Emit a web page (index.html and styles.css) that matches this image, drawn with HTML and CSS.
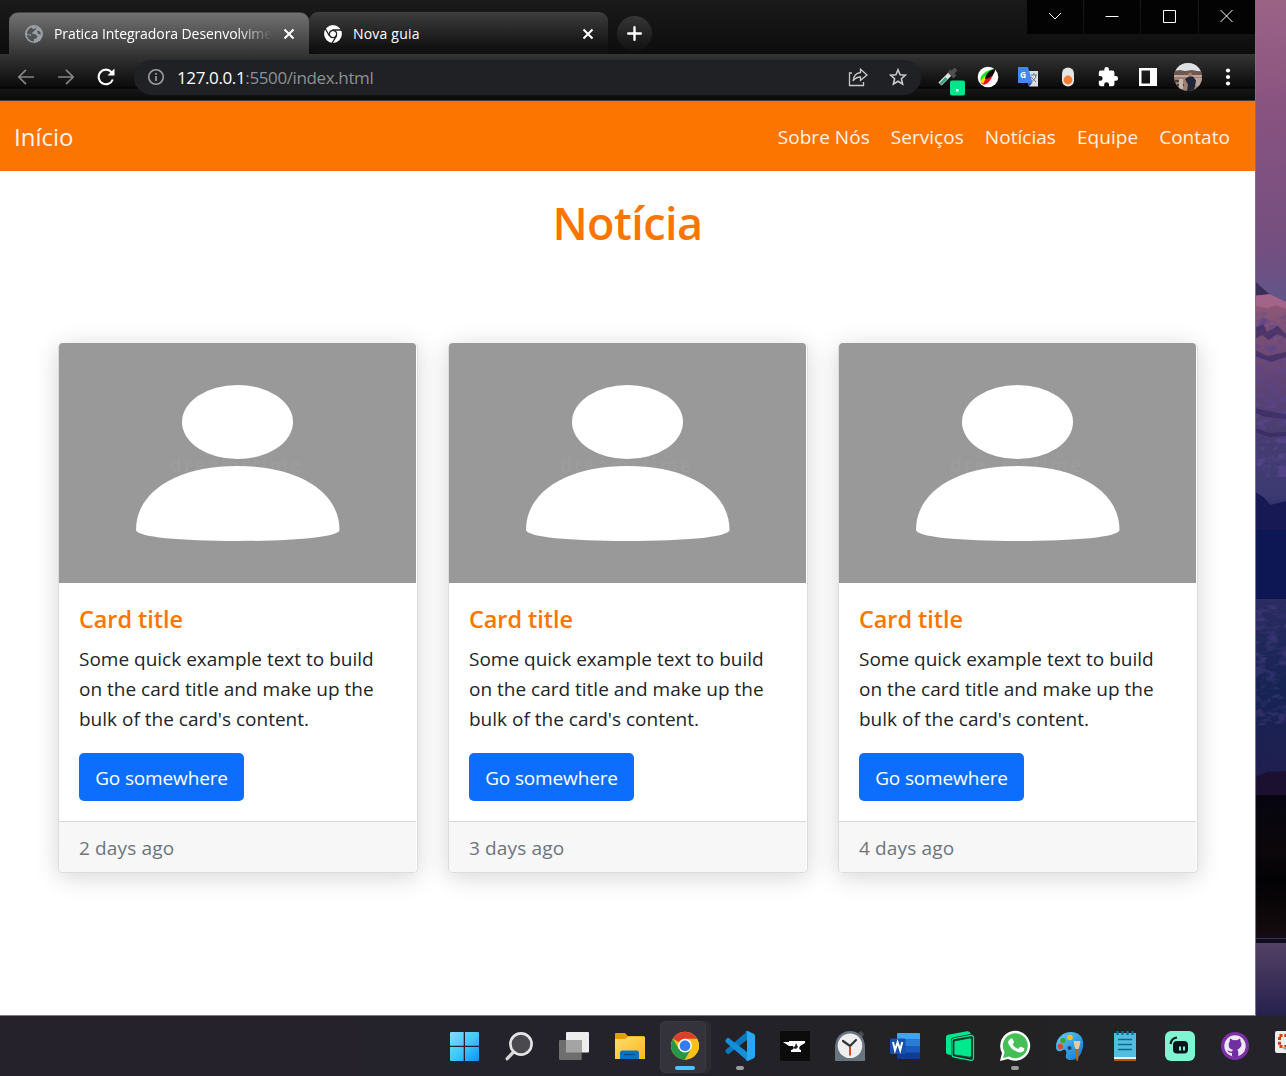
FILE: index.html
```html
<!DOCTYPE html>
<html lang="pt-BR">
<head>
<meta charset="utf-8">
<title>Pratica Integradora Desenvolvimento</title>
<link rel="stylesheet" href="styles.css">
</head>
<body>
<div class="desktop">
  <div class="browser">
    <div class="tabstrip">
      <div class="tab tab-active">
        <svg class="favicon" viewBox="0 0 18 18"><circle cx="9" cy="9" r="9" fill="#9aa0a6"/><path d="M2 9C2 6 3.500 3.500 6.500 2.500L8.500 4.500 11.500 2.300Q11 5.500 8.500 6.500L6.500 8.500l3 .5 3 2-1 2.500L9 14v2.500C5 16.500 2 13.500 2 9.500l4 1.500v-1.500ZM12 5.500l3 1 1 3-3-.5Z" fill="#505254"/></svg>
        <span class="tab-title fade">Pratica Integradora Desenvolvime</span>
        <svg class="close" viewBox="0 0 12 12"><path d="M1.500 1.500l9 9M10.500 1.500l-9 9"/></svg>
      </div>
      <div class="tab tab-idle">
        <svg class="favicon" viewBox="0 0 18 18"><circle cx="9" cy="9" r="6.400" fill="none" stroke="#fff" stroke-width="5"/><circle cx="9" cy="9" r="3" fill="#fff"/><path d="M8.500 5H18M5.300 10.700L1 3M12.600 10.700L8 18.300" stroke="#222" stroke-width="1.300"/><circle cx="9" cy="9" r="3.700" fill="none" stroke="#222" stroke-width="1.200"/></svg>
        <span class="tab-title">Nova guia</span>
        <svg class="close" viewBox="0 0 12 12"><path d="M1.500 1.500l9 9M10.500 1.500l-9 9"/></svg>
      </div>
      <div class="newtab"><svg width="15" height="15" viewBox="0 0 15 15"><path d="M7.500 1.200v12.600M1.200 7.500h12.600" stroke="#fff" stroke-width="2.400" stroke-linecap="round"/></svg></div>
      <div class="winctl">
        <span><svg width="14" height="14" viewBox="0 0 14 14"><path d="M1 4l6 6 6-6"/></svg></span>
        <span><svg width="14" height="14" viewBox="0 0 14 14"><path d="M.5 7.500h13"/></svg></span>
        <span><svg width="14" height="14" viewBox="0 0 14 14"><path d="M.5 1.500h12v12h-12z"/></svg></span>
        <span><svg width="14" height="14" viewBox="0 0 14 14"><path d="M.5 1l12 12M12.500 1L.5 13"/></svg></span>
      </div>
    </div>
    <div class="toolbar">
      <svg class="nav-ico" viewBox="0 0 18 18"><path d="M17 9H2M9 1.800L1.800 9 9 16.200" fill="none" stroke="#858585" stroke-width="1.700"/></svg>
      <svg class="nav-ico" viewBox="0 0 18 18"><path d="M1 9h15M9 1.800L16.200 9 9 16.200" fill="none" stroke="#858585" stroke-width="1.700"/></svg>
      <svg class="nav-ico" viewBox="0 0 18 18"><path d="M15.800 11.500A7.300 7.300 0 1 1 14.500 4.200" fill="none" stroke="#fff" stroke-width="2.100"/><path d="M17.500.5v7h-7z" fill="#fff"/></svg>
      <div class="omnibox">
        <svg class="info" viewBox="0 0 18 18"><circle cx="9" cy="9" r="7.300" fill="none" stroke="#9aa0a6" stroke-width="1.600"/><path d="M9 8v5M9 5v1.700" stroke="#9aa0a6" stroke-width="1.700"/></svg>
        <span class="url"><b>127.0.0.1</b>:5500/index.html</span>
        <svg class="share" viewBox="0 0 20 20"><path d="M4 6H1.500v12.500H15.500V15M12.500 2.200L19 8l-6.500 5.300V10C9 10 7 11 5 14 5.500 9 8.500 6 12.500 5.500Z" fill="none" stroke="#c8c9ca" stroke-width="1.300"/></svg>
        <svg class="star" viewBox="0 0 18 18"><path d="M9 1.800l2.100 5 5.300.4-4 3.500 1.200 5.300L9 13.200 4.400 16l1.200-5.300-4-3.500 5.300-.4Z" fill="none" stroke="#c8c9ca" stroke-width="1.600"/></svg>
      </div>
      <div class="extensions">
        <svg width="28" height="30" viewBox="0 0 28 30"><path d="M2 18L13 7" stroke="#dce7e3" stroke-width="4.500"/><path d="M2.500 18L8.500 12" stroke="#37a27b" stroke-width="2.500"/><path d="M11 5l6 6M13.500 7.500L18 3" stroke="#505050" stroke-width="4"/><rect x="12" y="14.500" width="15" height="15" rx="2" fill="#00e58b"/><rect x="18" y="23" width="2.500" height="2.500" fill="#fff"/></svg>
        <svg width="22" height="22" viewBox="0 0 22 22"><circle cx="11" cy="11" r="10.300" fill="#fff"/><path d="M4 16C1 10 10 3 18 3L9 13Z" fill="#17e51f"/><path d="M4 17C8 22 15 15 18 3L9 12Z" fill="#f10c18"/><path d="M3.500 15L8 10l1 2-3 6Z" fill="#ffd900"/><path d="M8 13C9 7 13 4 18 3 18 8 14 12 8 13Z" fill="#050505"/></svg>
        <svg width="22" height="22" viewBox="0 0 22 22"><path d="M9 5h12v15.500H12Z" fill="#ddd"/><path d="M1 1h10l4.500 16H1Z" fill="#4386ee"/><path d="M11 17h4l-2.500 3.500Z" fill="#315bbb"/><text x="3" y="11.500" font-size="8.500" font-family="Open Sans, sans-serif" font-weight="700" fill="#fff">G</text><path d="M14 9h6M17 7v2M19 9c0 3-3 6-5 7M14 11l5 5" fill="none" stroke="#607d8b" stroke-width="1"/></svg>
        <svg width="22" height="22" viewBox="0 0 22 22"><rect x="5" y="1.500" width="12" height="19" rx="6" fill="#e4e4e4"/><circle cx="11" cy="14" r="4.400" fill="#f57c30"/></svg>
        <svg width="22" height="22" viewBox="0 0 24 24"><path d="M20.500 11H19V7a2 2 0 0 0-2-2h-4V3.500a2.500 2.500 0 0 0-5 0V5H4a2 2 0 0 0-2 2v3.800h1.500a2.700 2.700 0 0 1 0 5.400H2V20a2 2 0 0 0 2 2h3.800v-1.500a2.700 2.700 0 0 1 5.400 0V22H17a2 2 0 0 0 2-2v-4h1.500a2.500 2.500 0 0 0 0-5Z" fill="#fff"/></svg>
        <svg width="22" height="22" viewBox="0 0 22 22"><path fill-rule="evenodd" d="M2 2h18v18H2ZM4.500 4.500v13H13v-13Z" fill="#fff"/></svg>
        <svg width="28" height="28" viewBox="0 0 28 28"><clipPath id="avatar"><circle cx="14" cy="14" r="14"/></clipPath><g clip-path="url(#avatar)"><rect width="28" height="28" fill="#9a7f72"/><rect width="28" height="8" fill="#dfe0e2"/><path d="M0 8l6-1 5 1 7-1 10 2v5H0Z" fill="#6d5750"/><path d="M0 12h28v2H0Z" fill="#c0a497"/><path d="M1 17h8v2H1ZM3 21h7v2H3Z" fill="#473d3b"/><path d="M5 16h4v10H5Z" fill="#c3b7ad"/><path d="M20 15h8v8h-8Z" fill="#b3a39b"/><circle cx="16" cy="11.500" r="2" fill="#af7b63"/><path d="M11 16l4-2.500h4l3 4-1 6-2 5h-6l1-7Z" fill="#1f2535"/></g></svg>
        <svg width="6" height="18" viewBox="0 0 6 18"><circle cx="3" cy="2.500" r="2.100" fill="#fff"/><circle cx="3" cy="9" r="2.100" fill="#fff"/><circle cx="3" cy="15.500" r="2.100" fill="#fff"/></svg>
      </div>
    </div>
    <div class="page">
      <nav class="navbar">
        <a class="brand">Início</a>
        <div class="links"><a>Sobre Nós</a><a>Serviços</a><a>Notícias</a><a>Equipe</a><a>Contato</a></div>
      </nav>
      <h1>Notícia</h1>
      <main class="cards">
        <article class="card">
          <svg class="photo" viewBox="0 0 357 240"><rect width="357" height="240" fill="#999"/><text class="mark" x="111" y="129">dreamstime</text><ellipse cx="178.500" cy="79" rx="55.500" ry="37" fill="#fff"/><path d="M77 187C77 149 117 123 178.500 123S280.500 149 280.500 187C280 194 236 198 178.500 198S78 194 77 187Z" fill="#fff"/></svg>
          <div class="card-body"><h2>Card title</h2><p>Some quick example text to build<br>on the card title and make up the<br>bulk of the card's content.</p><a class="btn">Go somewhere</a></div>
          <footer>2 days ago</footer>
        </article>
        <article class="card">
          <svg class="photo" viewBox="0 0 357 240"><rect width="357" height="240" fill="#999"/><text class="mark" x="111" y="129">dreamstime</text><ellipse cx="178.500" cy="79" rx="55.500" ry="37" fill="#fff"/><path d="M77 187C77 149 117 123 178.500 123S280.500 149 280.500 187C280 194 236 198 178.500 198S78 194 77 187Z" fill="#fff"/></svg>
          <div class="card-body"><h2>Card title</h2><p>Some quick example text to build<br>on the card title and make up the<br>bulk of the card's content.</p><a class="btn">Go somewhere</a></div>
          <footer>3 days ago</footer>
        </article>
        <article class="card">
          <svg class="photo" viewBox="0 0 357 240"><rect width="357" height="240" fill="#999"/><text class="mark" x="111" y="129">dreamstime</text><ellipse cx="178.500" cy="79" rx="55.500" ry="37" fill="#fff"/><path d="M77 187C77 149 117 123 178.500 123S280.500 149 280.500 187C280 194 236 198 178.500 198S78 194 77 187Z" fill="#fff"/></svg>
          <div class="card-body"><h2>Card title</h2><p>Some quick example text to build<br>on the card title and make up the<br>bulk of the card's content.</p><a class="btn">Go somewhere</a></div>
          <footer>4 days ago</footer>
        </article>
      </main>
    </div>
  </div>
  <svg class="wallpaper" width="31" height="1016" viewBox="0 0 30 1016" preserveAspectRatio="none">
    <defs>
      <linearGradient id="sky" x1="0" y1="0" x2="0" y2="1"><stop offset="0" stop-color="#9b6386"/><stop offset=".35" stop-color="#895380"/><stop offset=".8" stop-color="#744f80"/><stop offset="1" stop-color="#5d5689"/></linearGradient>
      <linearGradient id="rock" x1="0" y1="0" x2="0" y2="1"><stop offset="0" stop-color="#8d5876"/><stop offset=".3" stop-color="#654575"/><stop offset=".6" stop-color="#453c70"/><stop offset=".85" stop-color="#3c3a72"/><stop offset="1" stop-color="#14164f"/></linearGradient>
      <linearGradient id="snow" x1="0" y1="0" x2="0" y2="1"><stop offset="0" stop-color="#2b2c61"/><stop offset=".5" stop-color="#152453"/><stop offset="1" stop-color="#211e51"/></linearGradient>
      <linearGradient id="lake" x1="0" y1="0" x2="0" y2="1"><stop offset="0" stop-color="#584466"/><stop offset="1" stop-color="#25204e"/></linearGradient>
      <linearGradient id="shore" x1="0" y1="0" x2="0" y2="1"><stop offset="0" stop-color="#060510"/><stop offset=".4" stop-color="#0b070a"/><stop offset=".6" stop-color="#020204"/><stop offset="1" stop-color="#150c0e"/></linearGradient>
      <filter id="grain" x="0" y="0" width="1" height="1"><feTurbulence type="fractalNoise" baseFrequency=".09 .16" numOctaves="3" seed="4"/><feColorMatrix values="0 0 0 0 .1  0 0 0 0 .06  0 0 0 0 .28  4 0 0 0 -1.900"/></filter>
    </defs>
    <rect width="30" height="310" fill="url(#sky)"/>
    <path d="M0 281l6 6 9 8H0Z" fill="#3b2d59"/>
    <path d="M0 296l14-2 16 8v12H0Z" fill="#a4648a"/>
    <path d="M0 306l12 2 8-3 10 4v221H0Z" fill="url(#rock)"/>
    <rect y="312" width="30" height="165" filter="url(#grain)" opacity=".8"/>
    <path d="M0 328l8-4 4 8 10-6 8 8v4l-9-4-8 6-6-5-7 4ZM0 350l12 6 18-4v5l-14 5L0 356ZM0 408l12 3 18 3v5l-20-2-10-4ZM0 428l14 5 16-1v4l-16 1L0 432Z" fill="#33265d" opacity=".6"/>
    <path d="M0 492l8 5 7 8 15-4v50H0Z" fill="#171954"/>
    <rect y="530" width="30" height="70" fill="#0d1753"/>
    <rect y="599" width="30" height="180" fill="url(#snow)"/>
    <rect y="605" width="30" height="120" filter="url(#grain)" opacity=".4"/>
    <path d="M0 777l12-5 18-1v31H0Z" fill="#1b1030"/>
    <rect y="795" width="30" height="142" fill="url(#shore)"/>
    <rect y="936" width="30" height="80" fill="url(#lake)"/>
    <path d="M0 935h30v8H0Z" fill="#100c1b"/><path d="M0 938h30v1H0Z" fill="#423345"/>
    <rect width="1" height="1016" fill="#777"/>
  </svg>
</div>
<div class="taskbar">
  <svg viewBox="0 0 30 30"><defs><linearGradient id="win" gradientUnits="userSpaceOnUse" x1="0" y1="1" x2="29" y2="30"><stop offset="0" stop-color="#83dcff"/><stop offset=".5" stop-color="#43c8fc"/><stop offset="1" stop-color="#0795f5"/></linearGradient></defs><path d="M1 1h12.700v13.700H0V2a1 1 0 0 1 1-1ZM15 1h13a1 1 0 0 1 1 1v12.700H15ZM0 16h13.700v14H1a1 1 0 0 1-1-1ZM15 16h14v13a1 1 0 0 1-1 1H15Z" fill="url(#win)"/></svg>
  <svg viewBox="0 0 30 30"><path d="M8 21.500L2.200 27.700" stroke="#d5d5d8" stroke-width="3.300" stroke-linecap="round"/><circle cx="16" cy="13" r="10.600" fill="#4a4950" stroke="#e3e4e6" stroke-width="2.600"/></svg>
  <svg viewBox="0 0 30 30"><rect x="6" y="1" width="23" height="20.500" rx="1" fill="#ededee"/><rect x="-1" y="9" width="22.700" height="20" rx="1" fill="#6e6e6e"/><path d="M6 9h15.700v12.500H6Z" fill="#a4a4a4"/></svg>
  <svg viewBox="0 0 30 30"><defs><linearGradient id="fold" x1="0" y1="0" x2="1" y2="1"><stop offset="0" stop-color="#ffdd70"/><stop offset="1" stop-color="#f8ba17"/></linearGradient></defs><path d="M0 3a1 1 0 0 1 1-1h9l3 3h16v9H0Z" fill="#dfa000"/><path d="M0 8h10l3-2.500h16a1 1 0 0 1 1 1V28H0Z" fill="url(#fold)"/><path d="M5 28v-6a2.500 2.500 0 0 1 2.500-2.500h14A2.500 2.500 0 0 1 24 22v6Z" fill="#0872c8"/><path d="M9 23.500h11" stroke="#084987" stroke-width="1.200"/></svg>
  <div class="task current"><svg viewBox="0 0 30 30"><circle cx="15" cy="14.700" r="14" fill="#fbc116"/><path d="M15 14.700L2.900 7.700A14 14 0 0 1 27.100 7.700H15Z" fill="#dc3f2d"/><path d="M2.900 7.700A14 14 0 0 0 15 28.700L21 18.200 15 14.700 9 18.200Z" fill="#26964a"/><path d="M15 28.700L21 18.200 22 8H27.300A14 14 0 0 1 15 28.700Z" fill="#fbc116"/><circle cx="15" cy="14.700" r="6.900" fill="#fff"/><circle cx="15" cy="14.700" r="5.400" fill="#347df0"/></svg></div>
  <div class="task open"><svg viewBox="0 0 30 30"><path d="M22 1v8L3 23.500.5 21v-2L22 .5Z" fill="#0877be"/><path d="M22 29v-8L3 6.500.5 9v2L22 29.500Z" fill="#1690d8"/><path d="M20.500.5L23 0l6 3q1 .5 1 2v20q0 1.500-1 2l-6 3-2.500-.7L22 28V2Z" fill="#2aa7f2"/></svg></div>
  <svg viewBox="0 0 30 30"><path d="M0 0h30v30H0Z" fill="#0c0c0c"/><path d="M9 10h16v2l-5 3q-2 3 1 4v2H11v-2q4-1 2-4H9L3 11h6Z" fill="#fff"/><path d="M16 12l2 4-2 2-3-1 2-2Z" fill="#222"/></svg>
  <svg viewBox="0 0 30 30"><path d="M0 15L5 4h20l5 11v15H0Z" fill="#687580"/><path d="M23 2l3-2 3 3-2 4Z" fill="#4b4c4d"/><circle cx="15" cy="14.700" r="14.700" fill="#687580"/><circle cx="15" cy="14.700" r="12.300" fill="#eee"/><path d="M8 10l7 5 6-6" fill="none" stroke="#303537" stroke-width="2.200" stroke-linecap="round"/><path d="M15 15.500v9" stroke="#d63800" stroke-width="1.800"/></svg>
  <svg viewBox="0 0 30 30"><rect x="7" y="2" width="23" height="26" rx="1.500" fill="#103f91"/><path d="M7 3q0-1 1-1h21q1 0 1 1v5.500H7Z" fill="#41a5ee"/><path d="M7 8.500h23V15H7Z" fill="#2b7cd3"/><path d="M7 15h23v6.500H7Z" fill="#185abd"/><rect y="7.500" width="15.500" height="15.500" rx="1.200" fill="#1750ad"/><path d="M3 11l2 8.300 2.600-8 2.600 8 2-8.300" fill="none" stroke="#fff" stroke-width="2"/></svg>
  <svg viewBox="0 0 30 30"><path d="M1 6q0-2 2-2.300L22 .2q3-.4 4 2.800L8 6.500q-2 .5-2 2.500V24l-3-.5q-2-.5-2-2Z" fill="#00e88e"/><path d="M7 10q0-2 2-2.400L26 4.500q2.500-.2 2.500 2V27q0 2.500-2.500 2.300L9 26q-2-.5-2-2Z" fill="none" stroke="#00e88e" stroke-width="1.300"/><path d="M9 11.500q0-1.500 1.500-1.800L24.500 7q2-.2 2 1.500v16q0 2-2 1.700L10.500 24Q9 23.700 9 22.500Z" fill="#00e88e" stroke="#17513a" stroke-width="1"/></svg>
  <div class="task open"><svg viewBox="0 0 30 30"><path d="M0 30l2-8A15 15 0 1 1 8 28Z" fill="#fff"/><path d="M3 27l1.600-5.800A12.500 12.500 0 1 1 9 25.500Z" fill="#43bf55"/><path d="M9.800 8.200q2-2 3 0l1.200 2.600q.2.900-1.400 2.600 2 3.500 5.500 4.700l1.700-2q.7-.7 1.500-.3l2.700 1.400q.9.700-.2 2.600-2.300 3-7.200.8-5.300-2.100-8-7.300-1.300-3 1.200-5.100Z" fill="#fff"/></svg></div>
  <svg viewBox="0 0 30 30"><defs><linearGradient id="pal" x1="0" y1="0" x2="1" y2="1"><stop stop-color="#61d1f7"/><stop offset="1" stop-color="#0f75cf"/></linearGradient></defs><path d="M1 16C1 7 8 1 16 1c8 0 13 5 12 14-1 8-5 14-12 14-4 0-6-2-5-5s0-6-3-5c-3 2-7 2-7-3Z" fill="url(#pal)"/><circle cx="15" cy="6.500" r="2.800" fill="#ffc30f"/><circle cx="8" cy="9.500" r="2.600" fill="#3ca914"/><circle cx="5.300" cy="15.500" r="2.700" fill="#d94b28"/><circle cx="14.500" cy="17" r="2" fill="#20466b"/><path d="M20.500 18h3.200l-.5 11q-1 2-2 0Z" fill="#b8681a"/><path d="M18.500 10h7l-1 5.500-1 2.500h-3l-1-2.500Z" fill="#e5c9a0"/></svg>
  <svg viewBox="0 0 30 30"><path d="M4 2h22v25H4Z" fill="#54bddf"/><path d="M4 26h22v2H4Z" fill="#eee"/><path d="M4 28h22v2H4Z" fill="#ad570f"/><path d="M8 8.500h14M8 13.500h14M8 18.500h14" stroke="#086b94" stroke-width="1.600"/><path d="M7.500 0v4M12.500 0v4M17.500 0v4M22.500 0v4" stroke="#087195" stroke-width="2.300"/></svg>
  <svg viewBox="0 0 30 30"><rect width="30" height="30" rx="6" fill="#80f5d2"/><rect x="8" y="10" width="15" height="12.500" rx="4" fill="#07161b"/><path d="M15 15.500v4M19 15.500v4" stroke="#80f5d2" stroke-width="2"/><path d="M5.500 13q1-6 6.500-6.500" fill="none" stroke="#07161b" stroke-width="2.200"/></svg>
  <svg viewBox="0 0 30 30"><circle cx="15" cy="15" r="14" fill="#7d30a5"/><circle cx="15" cy="15" r="10.700" fill="#eee8f2"/><path d="M12 25.500V22q-3.800.3-4.700-3l2.700 1.500h2l1-1.700C9.500 18 8.500 16 8.800 13q0-1.500 1-2.500-.3-1.700.5-3l3 1.700q2-.5 3.700 0l3-1.700q.8 1.300.5 3 1 1 1 2.500.3 3-4.200 5.800 1 1 1 2.500v4.200q-2.500 1-6.300 0Z" fill="#7030a0"/></svg>
  <svg viewBox="0 0 30 30"><rect y="0" width="30" height="22" rx="2" fill="#eee"/><rect x="4.500" y="4.500" width="20" height="11" fill="none" stroke="#d83b01" stroke-width="3" stroke-dasharray="3 1.800"/><path d="M6 16l4 3h14v-3Z" fill="#9ba7b4"/></svg>
</div>
</body>
</html>
```
FILE: styles.css
```css
* { box-sizing: border-box; }
body { margin: 0; width: 1286px; height: 1076px; overflow: hidden; font-family: "Open Sans", "Noto Sans", sans-serif; color: #212529; }
svg { display: block; flex: none; }
.desktop { display: flex; height: 1016px; }
.browser { width: 1255px; height: 1016px; flex: none; border-bottom: 1px solid #7a7d7c; }
.wallpaper { width: 31px; }

.tabstrip { height: 54px; display: flex; align-items: flex-end; padding-left: 9px; background: linear-gradient(#1a1a1a, #0d0d0d); }
.tab { height: 42px; display: flex; align-items: center; padding: 0 14px 0 15px; color: #fff; font-size: 14px; border-radius: 9px 9px 0 0; border-top: 1px solid #424242; }
.tab-active { width: 300px; background: linear-gradient(#727272, #353535); }
.tab-idle { width: 299px; background: linear-gradient(#3c3c3c, #111 85%); border-radius: 9px 9px 0 9px; }
.favicon { width: 18px; height: 18px; margin: 0 11px 0 1px; }
.tab-idle .favicon { margin-left: 0; }
.tab-title { flex: 1; white-space: nowrap; overflow: hidden; letter-spacing: .2px; }
.fade { letter-spacing: -.08px; -webkit-mask-image: linear-gradient(90deg, #000 84%, transparent); mask-image: linear-gradient(90deg, #000 84%, transparent); }
.close { width: 12px; height: 12px; margin-left: 11px; fill: none; stroke: #fff; stroke-width: 2; }
.newtab { width: 35px; height: 35px; margin: 0 0 3px 9px; border-radius: 50%; display: grid; place-items: center; background: linear-gradient(#363636, #101010); }
.winctl { align-self: flex-start; margin-left: auto; display: flex; gap: 1px; }
.winctl span { width: 56.300px; height: 34px; padding-bottom: 3px; display: grid; place-items: center; background: #030303; }
.winctl svg { fill: none; stroke: #fff; stroke-width: 1; }

.toolbar { height: 47px; display: flex; align-items: center; padding: 0 0 1px 17px; border-top: 1px solid #353535; border-bottom: 1px solid #3e3e3e; background: linear-gradient(#333, #0b0b0b 32px, #000 33px, #151515 34px, #0b0b0b); }
.nav-ico { width: 18px; height: 18px; margin-right: 22px; }
.omnibox { width: 787px; height: 35px; margin-left: -3px; border-radius: 18px; display: flex; align-items: center; background: #202124; padding-left: 13px; }
.info { width: 18px; height: 18px; }
.url { flex: 1; margin-left: 12px; font-size: 17px; letter-spacing: -.38px; color: #8c9095; }
.url b { font-weight: 400; color: #fff; }
.share { width: 20px; height: 20px; margin-right: 21px; }
.star { width: 18px; height: 18px; margin-right: 14px; }
.extensions { display: flex; align-items: center; height: 44px; padding-left: 17px; gap: 18px; }
.extensions svg:first-child { margin: 7px -7px 0 0; }
.extensions svg:nth-child(7) { margin: 0 5px 0 -3px; }

.page { height: 914px; background: #fff; }
.navbar { height: 70px; display: flex; align-items: center; justify-content: space-between; padding: 0 25px 0 14px; background: #fb7500; color: #fdf3ea; }
.brand { font-size: 24px; }
.links { display: flex; gap: 21px; font-size: 19px; letter-spacing: .04px; padding-top: 1px; }
h1 { margin: 0; height: 172px; padding-top: 18px; text-align: center; font-size: 45px; line-height: 67px; font-weight: 600; color: #fb7500; letter-spacing: -.55px; }
.cards { display: flex; gap: 30px; padding: 0 58px; }
.card { width: 360px; height: 530px; flex: none; display: flex; flex-direction: column; border: 1px solid #dcdcdc; border-top: 0; border-radius: 5px; background: #fff; box-shadow: 0 4px 25px rgba(0,0,0,.17); }
.photo { width: 357px; height: 240px; border-radius: 4px 4px 0 0; }
.mark { font-size: 19px; font-weight: 600; letter-spacing: 2.200px; fill: #9d9d9d; }
.card-body { height: 238px; padding: 21px 20px 20px; flex: none; }
h2 { margin: 0 0 9px; font-size: 23.500px; line-height: 31px; font-weight: 600; letter-spacing: -.08px; color: #fb7500; }
.card p { margin: 0 0 19px; font-size: 19px; line-height: 30px; white-space: nowrap; }
.btn { display: flex; width: 165px; height: 48px; padding-top: 2px; justify-content: center; align-items: center; border-radius: 5px; background: #0d6efd; color: #fff; font-size: 19px; letter-spacing: -.15px; white-space: nowrap; }
.card footer { width: 357px; height: 51px; border-top: 1px solid #d7d7d7; border-radius: 0 0 4px 4px; padding: 11px 20px 9px; font-size: 19px; line-height: 30px; letter-spacing: .15px; background: #f7f7f7; color: #6c757d; }

.taskbar { height: 60px; display: flex; gap: 25px; padding: 15px 0 0 450px; background: linear-gradient(90deg, #25222c, #24222a 55%, #222 75%, #24232a); overflow: hidden; }
.taskbar svg { width: 30px; height: 30px; overflow: visible; }
.task { position: relative; flex: none; width: 30px; height: 45px; }
.task svg { position: relative; }
.task::after { content: ""; position: absolute; left: 11px; top: 35px; width: 8px; height: 4px; border-radius: 2px; background: #9b9b9b; }
.current::before { content: ""; position: absolute; left: -10px; top: -10px; width: 44px; height: 50px; border-radius: 5px; background: #34323a; box-shadow: 5px 0 0 #2d2b32; border: 1px solid #3a3840; }
.current::after { left: 5px; width: 20px; background: #4cc2ff; }
```
